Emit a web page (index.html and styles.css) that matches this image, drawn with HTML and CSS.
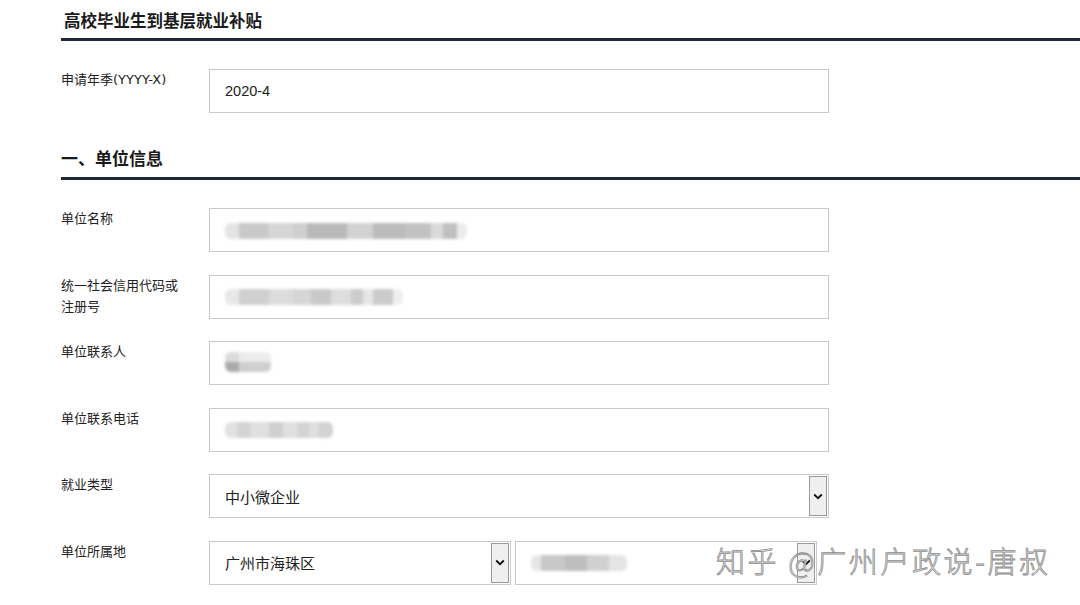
FILE: index.html
```html
<!DOCTYPE html>
<html lang="zh-CN">
<head>
<meta charset="utf-8">
<title>高校毕业生到基层就业补贴</title>
<link rel="stylesheet" href="styles.css">
</head>
<body>
<div class="page">
  <h2 class="section-title first">高校毕业生到基层就业补贴</h2>
  <div class="row row-top">
    <div class="label">申请年季(YYYY-X)</div>
    <div class="field"><div class="input">2020-4</div></div>
  </div>

  <h2 class="section-title second">一、单位信息</h2>

  <div class="row">
    <div class="label">单位名称</div>
    <div class="field"><div class="input">
      <div class="blur">
        <span style="width:14px;background:#e4e4e4"></span><span style="width:30px;background:#c9c9c9"></span><span style="width:24px;background:#d6d6d6"></span><span style="width:14px;background:#cfcfcf"></span><span style="width:40px;background:#b9b9b9"></span><span style="width:26px;background:#d2d2d2"></span><span style="width:32px;background:#bcbcbc"></span><span style="width:26px;background:#c2c2c2"></span><span style="width:12px;background:#dadada"></span><span style="width:14px;background:#bfbfbf"></span><span style="width:10px;background:#ececec"></span>
      </div>
    </div></div>
  </div>

  <div class="row">
    <div class="label">统一社会信用代码或<br>注册号</div>
    <div class="field"><div class="input">
      <div class="blur">
        <span style="width:14px;background:#e8e8e8"></span><span style="width:30px;background:#d0d0d0"></span><span style="width:24px;background:#dcdcdc"></span><span style="width:18px;background:#d6d6d6"></span><span style="width:20px;background:#c9c9c9"></span><span style="width:20px;background:#dedede"></span><span style="width:12px;background:#cdcdcd"></span><span style="width:10px;background:#e6e6e6"></span><span style="width:20px;background:#cbcbcb"></span><span style="width:10px;background:#efefef"></span>
      </div>
    </div></div>
  </div>

  <div class="row">
    <div class="label">单位联系人</div>
    <div class="field"><div class="input">
      <div class="blur two">
        <div class="top"><span style="width:14px;background:#dcdcdc"></span><span style="width:32px;background:#ececec"></span></div>
        <div class="bot"><span style="width:14px;background:#aaaaaa"></span><span style="width:32px;background:#cfcfcf"></span></div>
      </div>
    </div></div>
  </div>

  <div class="row">
    <div class="label">单位联系电话</div>
    <div class="field"><div class="input">
      <div class="blur">
        <span style="width:12px;background:#e2e2e2"></span><span style="width:14px;background:#d4d4d4"></span><span style="width:18px;background:#e0e0e0"></span><span style="width:14px;background:#d0d0d0"></span><span style="width:14px;background:#e0e0e0"></span><span style="width:12px;background:#d4d4d4"></span><span style="width:10px;background:#dedede"></span><span style="width:14px;background:#d2d2d2"></span>
      </div>
    </div></div>
  </div>

  <div class="row">
    <div class="label">就业类型</div>
    <div class="field">
      <div class="select full">
        <span class="value">中小微企业</span>
        <span class="arrow"><svg width="10" height="7" viewBox="0 0 10 7"><path d="M1.2 1.5 L5 5.2 L8.8 1.5" fill="none" stroke="#111" stroke-width="1.8"/></svg></span>
      </div>
    </div>
  </div>

  <div class="row">
    <div class="label">单位所属地</div>
    <div class="field split">
      <div class="select half">
        <span class="value">广州市海珠区</span>
        <span class="arrow"><svg width="10" height="7" viewBox="0 0 10 7"><path d="M1.2 1.5 L5 5.2 L8.8 1.5" fill="none" stroke="#111" stroke-width="1.8"/></svg></span>
      </div>
      <div class="select half second">
        <span class="value">
          <span class="blur small">
            <span style="width:10px;background:#e6e6e6"></span><span style="width:24px;background:#c8c8c8"></span><span style="width:22px;background:#bdbdbd"></span><span style="width:22px;background:#d0d0d0"></span><span style="width:18px;background:#e4e4e4"></span>
          </span>
        </span>
        <span class="arrow"><svg width="10" height="7" viewBox="0 0 10 7"><path d="M1.2 1.5 L5 5.2 L8.8 1.5" fill="none" stroke="#111" stroke-width="1.8"/></svg></span>
      </div>
    </div>
  </div>
</div>
<div class="watermark">知乎 @广州户政说-唐叔</div>
</body>
</html>
```

FILE: styles.css
```css
html, body {
  margin: 0;
  padding: 0;
  background: #ffffff;
}

body {
  font-family: "Noto Sans CJK SC", "Noto Sans", sans-serif;
  color: #222;
  width: 1080px;
  height: 605px;
  overflow: hidden;
  position: relative;
}

.page {
  padding-left: 61px;
}

.section-title {
  margin: 0;
  font-size: 16.5px;
  font-weight: 700;
  line-height: 24px;
  color: #1a1a1a;
  padding-left: 3px;
  border-bottom: 3px solid #1d2935;
}

.section-title.first {
  padding-top: 8px;
  padding-bottom: 5.5px;
  margin-bottom: 28.5px;
}

.section-title.second {
  padding-left: 0;
  font-size: 17px;
  margin-top: 33px;
  padding-bottom: 7px;
  margin-bottom: 28px;
}

.row {
  display: flex;
  align-items: flex-start;
  margin-bottom: 22.5px;
}

.row-top {
  margin-bottom: 0;
}

.label {
  width: 148px;
  flex: none;
  font-family: "DejaVu Sans", "Noto Sans CJK SC", sans-serif;
  font-size: 13px;
  line-height: 21px;
  color: #222;
}

.field {
  flex: none;
}

.field.split {
  display: flex;
  gap: 4px;
}

.input,
.select {
  box-sizing: border-box;
  height: 44px;
  border: 1px solid #c9c9c9;
  background: #fff;
  display: flex;
  align-items: center;
  padding-left: 15px;
  font-family: "Liberation Sans", "Noto Sans CJK SC", sans-serif;
  font-size: 14.5px;
  color: #222;
}

.input {
  width: 620px;
}

.select {
  position: relative;
  justify-content: space-between;
  padding-right: 1px;
}

.select .value {
  font-family: "Noto Sans CJK SC", sans-serif;
  font-size: 15px;
  display: flex;
  align-items: center;
}

.select.full {
  width: 620px;
}

.select.half {
  width: 302px;
}

.arrow {
  box-sizing: border-box;
  width: 18px;
  height: 40px;
  border: 1px solid #9a9a9a;
  background: #efefef;
  display: flex;
  align-items: center;
  justify-content: center;
}

.blur {
  display: flex;
  height: 16px;
  border-radius: 6px;
  overflow: hidden;
  filter: blur(1.6px);
  margin-top: 1px;
}

.blur > span {
  display: block;
  height: 100%;
}

.blur.two {
  flex-direction: column;
  height: 20px;
  margin-top: -2px;
}

.blur.two .top,
.blur.two .bot {
  display: flex;
  height: 10px;
}

.blur.two span {
  display: block;
  height: 100%;
}

.watermark {
  position: absolute;
  left: 716px;
  top: 540px;
  font-family: "Noto Sans CJK SC", sans-serif;
  font-weight: 300;
  font-size: 29px;
  line-height: 40px;
  letter-spacing: 2.6px;
  color: #f6f6f6;
  -webkit-text-stroke: 0.8px #8c8c8c;
  white-space: nowrap;
}
```
